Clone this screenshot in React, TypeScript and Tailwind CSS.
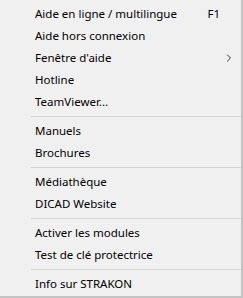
import { ChevronRight } from 'lucide-react';

type Item = { label: string; shortcut?: string; submenu?: boolean } | 'sep';

const items: Item[] = [
    { label: 'Aide en ligne / multilingue', shortcut: 'F1' },
    { label: 'Aide hors connexion' },
    { label: "Fenêtre d'aide", submenu: true },
    { label: 'Hotline' },
    { label: 'TeamViewer...' },
    'sep',
    { label: 'Manuels' },
    { label: 'Brochures' },
    'sep',
    { label: 'Médiathèque' },
    { label: 'DICAD Website' },
    'sep',
    { label: 'Activer les modules' },
    { label: 'Test de clé protectrice' },
    'sep',
    { label: 'Info sur STRAKON' },
];

const App = () => {
    return (
        <div className="w-[243px] h-[298px] bg-[#f0f0f0] border-r-2 border-b-2 border-[#c4c4c4] pt-[3px] text-[11.5px] text-black font-['Noto_Sans',sans-serif] select-none">
            {items.map((item, i) =>
                item === 'sep' ? (
                    <div key={i} className="h-[7px] flex items-center pl-[31px]">
                        <div className="w-full h-px bg-[#d5d5d5]"></div>
                    </div>
                ) : (
                    <div key={i} className="h-[22px] flex items-center pl-[35px] pr-[6px]">
                        <span className="flex-1 whitespace-nowrap">{item.label}</span>
                        {item.shortcut && <span className="mr-[15px]">{item.shortcut}</span>}
                        {item.submenu && <ChevronRight size={12} strokeWidth={2} className="text-[#333]" />}
                    </div>
                )
            )}
        </div>
    );
};

export default App;
